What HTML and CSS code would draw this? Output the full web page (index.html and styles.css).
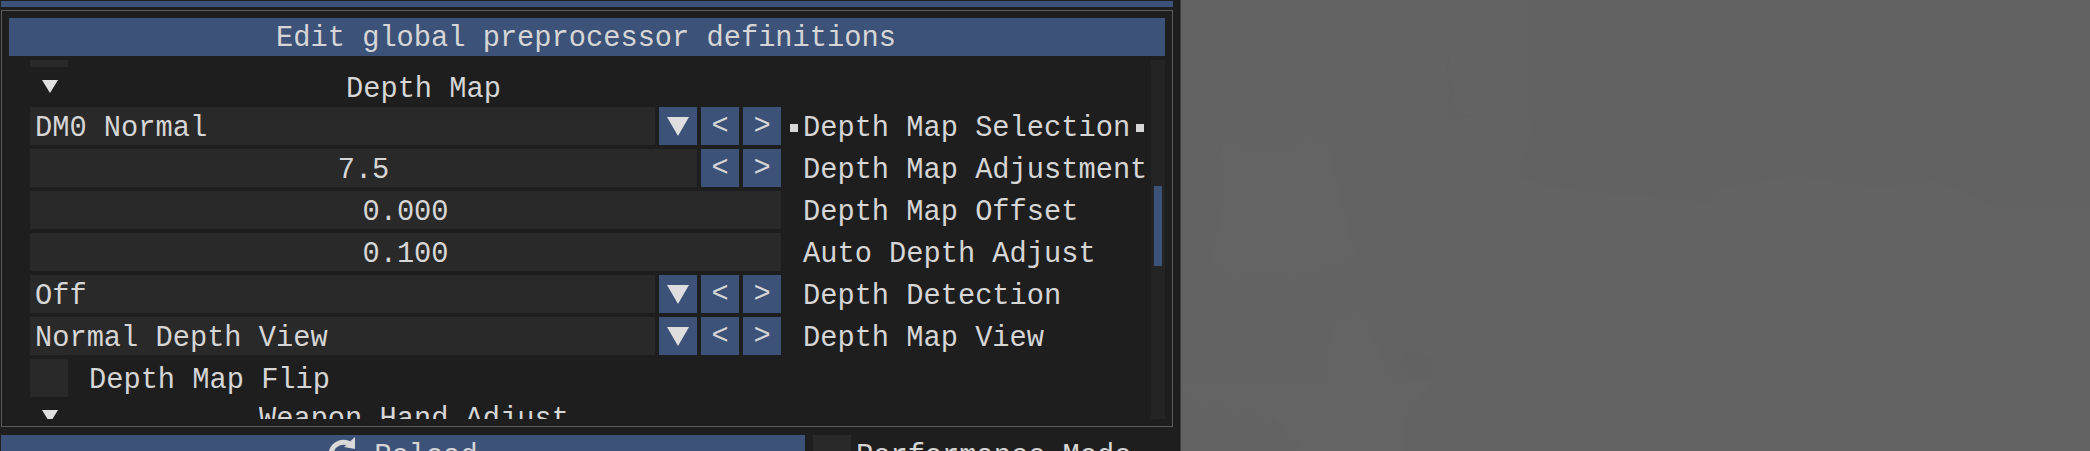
FILE: index.html
```html
<!DOCTYPE html>
<html lang="en">
<head>
<meta charset="utf-8">
<title>Edit global preprocessor definitions</title>
<link rel="stylesheet" href="styles.css">
</head>
<body>
<div class="app">
  <div class="panel">
    <div class="topbar"></div>
    <div class="window">
      <div class="title">Edit global preprocessor definitions</div>
      <div class="body">
        <div class="scroller">
          <div class="stub"></div>
          <div class="header">
            <svg class="tri-small" viewBox="0 0 16 13"><polygon points="0,0 16,0 8,13"/></svg>
            <span class="header-text">Depth Map</span>
          </div>
          <div class="row">
            <div class="controls">
              <div class="field">DM0 Normal</div>
              <div class="btn"><svg class="tri" viewBox="0 0 22 19"><polygon points="0,0 22,0 11,19"/></svg></div>
              <div class="btn">&lt;</div>
              <div class="btn">&gt;</div>
            </div>
            <div class="label label-marked"><i class="bullet"></i><span>Depth Map Selection</span><i class="bullet bullet-end"></i></div>
          </div>
          <div class="row">
            <div class="controls">
              <div class="field center">7.5</div>
              <div class="btn">&lt;</div>
              <div class="btn">&gt;</div>
            </div>
            <div class="label">Depth Map Adjustment</div>
          </div>
          <div class="row">
            <div class="controls"><div class="field center">0.000</div></div>
            <div class="label">Depth Map Offset</div>
          </div>
          <div class="row">
            <div class="controls"><div class="field center">0.100</div></div>
            <div class="label">Auto Depth Adjust</div>
          </div>
          <div class="row">
            <div class="controls">
              <div class="field">Off</div>
              <div class="btn"><svg class="tri" viewBox="0 0 22 19"><polygon points="0,0 22,0 11,19"/></svg></div>
              <div class="btn">&lt;</div>
              <div class="btn">&gt;</div>
            </div>
            <div class="label">Depth Detection</div>
          </div>
          <div class="row">
            <div class="controls">
              <div class="field">Normal Depth View</div>
              <div class="btn"><svg class="tri" viewBox="0 0 22 19"><polygon points="0,0 22,0 11,19"/></svg></div>
              <div class="btn">&lt;</div>
              <div class="btn">&gt;</div>
            </div>
            <div class="label">Depth Map View</div>
          </div>
          <div class="row">
            <div class="check"></div>
            <div class="check-label">Depth Map Flip</div>
          </div>
          <div class="header">
            <svg class="tri-small" viewBox="0 0 16 13"><polygon points="0,0 16,0 8,13"/></svg>
            <span class="header-text header-text-wide">Weapon Hand Adjust</span>
          </div>
        </div>
        <div class="scrollbar"><div class="thumb"></div></div>
      </div>
    </div>
    <div class="footer">
      <div class="reload">
        <svg class="reload-icon" viewBox="0 0 28 20"><path d="M3 16 C5 6 15 3 22 7" fill="none" stroke="#d9d9d9" stroke-width="5"/><polygon points="27,0 27,12 16,10" fill="#d9d9d9"/></svg>
        <span>Reload</span>
      </div>
      <div class="check"></div>
      <div class="perf">Performance Mode</div>
    </div>
  </div>
  <div class="backdrop">
    <svg class="shapes" viewBox="0 0 1566 1353" preserveAspectRatio="none">
      <path class="dark" d="M600 0 L600 90 L595 300 L605 380 L580 530 L650 565 L920 610 L915 570 L1060 525 L1200 565 L1300 540 L1400 620 L1566 625 L1566 0 Z"/>
      <path class="dark" d="M460 150 L468 250 L470 330 L500 352 L455 365 Z"/>
      <path class="light" d="M70 430 L105 410 L100 450 L170 450 L250 410 L300 770 L250 810 L130 835 L60 810 L52 780 L75 600 Z"/>
      <path class="light" d="M290 940 L320 985 L345 1050 L355 1145 L425 1145 L425 1175 L390 1230 L385 1353 L210 1353 L160 1260 L0 1190 L0 1145 L255 1145 L250 1050 L265 970 Z"/>
      <path class="dark" d="M405 1050 L435 1075 L430 1130 L400 1140 L378 1100 L382 1065 Z"/>
    </svg>
  </div>
</div>
</body>
</html>
```

FILE: styles.css
```css
html, body {
  margin: 0;
  height: 451px;
  overflow: hidden;
  background: #636363;
}

.app {
  display: flex;
  height: 451px;
  font-family: "Liberation Mono", monospace;
  font-size: 28.7px;
  color: #d6d6d6;
}

.panel {
  width: 1181px;
  flex: none;
  box-sizing: border-box;
  background: #1e1e1e;
  padding: 1px 7px 0 1px;
  overflow: hidden;
  border-right: 1px solid #3c3c3c;
}

.topbar {
  height: 6px;
  background: #3d5278;
}

.window {
  margin-top: 3px;
  height: 417px;
  box-sizing: border-box;
  border: 1px solid #5a5a5a;
  padding: 7px;
  display: flex;
  flex-direction: column;
  gap: 4px;
  background: #1e1e1e;
}

.title {
  height: 38px;
  flex: none;
  background: #3d5278;
  text-align: center;
  line-height: 41px;
  padding-right: 2px;
}

.body {
  flex: 1;
  min-height: 0;
  display: flex;
}

.scroller {
  flex: 1;
  min-width: 0;
  overflow: hidden;
  padding-left: 21px;
  display: flex;
  flex-direction: column;
  gap: 4px;
}

.stub {
  height: 7px;
  width: 38px;
  flex: none;
  background: #292929;
}

.header {
  height: 32px;
  flex: none;
  display: flex;
  align-items: flex-start;
  line-height: 37px;
}

.tri-small {
  width: 16px;
  height: 13px;
  flex: none;
  margin: 9px 0 0 12px;
  fill: #e0e0e0;
}

.header-text {
  margin-left: 288px;
}

.header-text-wide {
  margin-left: 201px;
}

.row {
  height: 38px;
  flex: none;
  display: flex;
  line-height: 43px;
}

.controls {
  width: 751px;
  flex: none;
  display: flex;
  gap: 4px;
}

.field {
  flex: 1;
  background: #292929;
  padding-left: 5px;
}

.center {
  padding-left: 0;
  text-align: center;
}

.btn {
  width: 38px;
  flex: none;
  display: flex;
  align-items: center;
  justify-content: center;
  background: #3d5278;
}

.tri {
  width: 22px;
  height: 19px;
  fill: #dedede;
}

.label {
  margin-left: 22px;
  white-space: nowrap;
}

.label-marked {
  margin-left: 9px;
  display: flex;
  align-items: flex-start;
}

.bullet {
  width: 8px;
  height: 8px;
  flex: none;
  margin: 17px 5px 0 0;
  background: #d6d6d6;
}

.bullet-end {
  margin: 17px 0 0 6px;
}

.check {
  width: 38px;
  height: 38px;
  flex: none;
  background: #292929;
}

.check-label {
  margin-left: 21px;
}

.scrollbar {
  width: 14px;
  flex: none;
  box-sizing: border-box;
  padding: 126px 3px 0;
  background: #242424;
}

.thumb {
  height: 80px;
  background: #3d5278;
}

.footer {
  margin-top: 8px;
  display: flex;
  height: 38px;
}

.reload {
  width: 804px;
  flex: none;
  background: #3d5278;
  margin-right: 8px;
  display: flex;
  justify-content: center;
  align-items: flex-start;
  line-height: 43px;
}

.reload-icon {
  width: 28px;
  height: 20px;
  flex: none;
  margin: 2px 18px 0 0;
}

.perf {
  margin-left: 5px;
  line-height: 43px;
  white-space: nowrap;
}

.backdrop {
  flex: 1;
  min-width: 0;
  background: #636363;
}

.shapes {
  display: block;
  width: 100%;
  height: 451px;
}

.dark {
  fill: #626262;
}

.light {
  fill: #646464;
}
```
